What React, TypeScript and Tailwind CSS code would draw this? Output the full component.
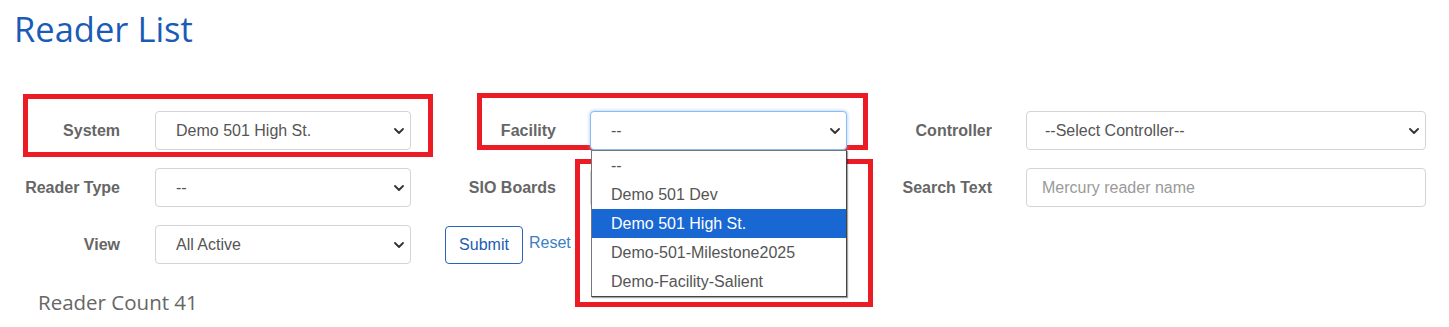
import React from 'react'

const Chevron = () => (
  <svg width="10" height="6" viewBox="0 0 10 6" className="shrink-0">
    <path d="M1 1l4 4 4-4" fill="none" stroke="#333" strokeWidth="1.8" strokeLinecap="round" strokeLinejoin="round" />
  </svg>
)

type FieldProps = {
  value: string
  width: string
  pad?: string
  focused?: boolean
  placeholder?: boolean
  arrow?: boolean
  children?: React.ReactNode
}

const Field = ({ value, width, pad = 'pl-[20px]', focused, placeholder, arrow = true, children }: FieldProps) => (
  <div className={`relative ${width} h-[39px] shrink-0`}>
    <div
      className={`flex h-full items-center justify-between rounded-[4px] border bg-white ${pad} pr-[6px] text-[16px] ${
        focused ? 'border-[#8cbdf2] shadow-[0_0_3px_1px_rgba(120,180,240,0.45)]' : 'border-[#d4d4d4]'
      } ${placeholder ? 'text-[#9a9a9a]' : 'text-[#555]'}`}
    >
      <span>{value}</span>
      {arrow && <Chevron />}
    </div>
    {children}
  </div>
)

const Label = ({ text, width }: { text: string; width: string }) => (
  <div className={`${width} shrink-0 text-right text-[16px] font-bold text-[#666]`}>{text}</div>
)

const facilities = ['--', 'Demo 501 Dev', 'Demo 501 High St.', 'Demo-501-Milestone2025', 'Demo-Facility-Salient']

export default function App() {
  return (
    <div className="relative h-[327px] w-[1449px] overflow-hidden bg-white font-['Liberation_Sans',Arial,sans-serif]">
      <h1 className="pl-[14px] pt-[9px] font-['Open_Sans',sans-serif] text-[34.5px] leading-[40px] text-[#1a5cb5]">
        Reader List
      </h1>

      <div className="mt-[62px] flex flex-col gap-[18px]">
        {/* row 1 */}
        <div className="flex h-[39px] items-center">
          <Label text="System" width="w-[120px]" />
          <div className="ml-[35px]">
            <Field value="Demo 501 High St." width="w-[256px]" />
          </div>
          <Label text="Facility" width="w-[145px]" />
          <div className="relative z-20 ml-[34px]">
            <Field value="--" width="w-[257px]" focused>
              {/* open dropdown list */}
              <div className="absolute left-[1px] top-full w-[256px] border border-[#777] border-b-[#444] border-r-[#444] bg-white shadow-[1px_1px_1px_rgba(0,0,0,0.35)]">
                {facilities.map((f) => (
                  <div
                    key={f}
                    className={`flex h-[29px] items-center pl-[19px] text-[16px] ${
                      f === 'Demo 501 High St.' ? 'bg-[#1967d2] text-white' : 'text-[#555]'
                    }`}
                  >
                    {f}
                  </div>
                ))}
              </div>
            </Field>
          </div>
          <Label text="Controller" width="w-[145px]" />
          <div className="ml-[34px]">
            <Field value="--Select Controller--" width="w-[400px]" pad="pl-[18px]" />
          </div>
        </div>

        {/* row 2 */}
        <div className="flex h-[39px] items-center">
          <Label text="Reader Type" width="w-[120px]" />
          <div className="ml-[35px]">
            <Field value="--" width="w-[256px]" />
          </div>
          <Label text="SIO Boards" width="w-[145px]" />
          <div className="ml-[34px]">
            {/* hidden under the open facility list */}
            <Field value="" width="w-[257px]" />
          </div>
          <Label text="Search Text" width="w-[145px]" />
          <div className="ml-[34px]">
            <Field value="Mercury reader name" width="w-[400px]" pad="pl-[15px]" placeholder arrow={false} />
          </div>
        </div>

        {/* row 3 */}
        <div className="flex h-[39px] items-center">
          <Label text="View" width="w-[120px]" />
          <div className="ml-[35px]">
            <Field value="All Active" width="w-[256px]" />
          </div>
          <button className="ml-[34px] h-[38px] w-[78px] rounded-[4px] border border-[#2a62b8] bg-white text-[16px] text-[#1d5cb4]">
            Submit
          </button>
          <a className="-mt-[4px] ml-[6px] text-[16px] text-[#3d7fc6]">Reset</a>
        </div>
      </div>

      <p className="mt-[25px] pl-[38px] font-['Open_Sans',sans-serif] text-[20.5px] leading-[26px] text-[#666]">
        Reader Count 41
      </p>

      {/* annotation boxes */}
      <div className="pointer-events-none absolute left-[23px] top-[94px] z-10 h-[63px] w-[410px] border-[5px] border-[#ec1c24]" />
      <div className="pointer-events-none absolute left-[477px] top-[93px] z-10 h-[57px] w-[391px] border-[5px] border-[#ec1c24]" />
      <div className="pointer-events-none absolute left-[575px] top-[159px] z-10 h-[148px] w-[298px] border-[5px] border-[#ec1c24]" />
    </div>
  )
}
